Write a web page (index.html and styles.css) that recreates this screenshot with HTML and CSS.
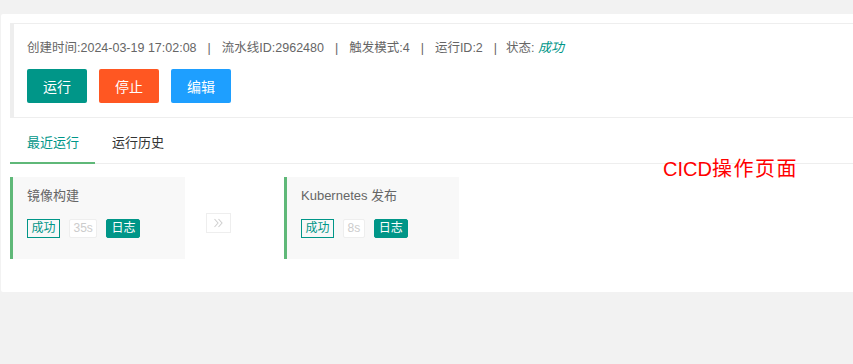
FILE: index.html
```html
<!DOCTYPE html>
<html lang="zh-CN">
<head>
<meta charset="utf-8">
<title>CICD</title>
<link rel="stylesheet" href="styles.css">
</head>
<body>
<div class="page">
  <div class="card">
    <div class="quote">
      <div class="meta">
        <span>创建时间:2024-03-19 17:02:08</span><span class="sep">|</span><span>流水线ID:2962480</span><span class="sep">|</span><span>触发模式:4</span><span class="sep">|</span><span>运行ID:2</span><span class="sep sep-last">|</span><span>状态: <em class="ok">成功</em></span>
      </div>
      <div class="btns">
        <button class="btn btn-run">运行</button>
        <button class="btn btn-stop">停止</button>
        <button class="btn btn-edit">编辑</button>
      </div>
    </div>
    <div class="tabs">
      <ul class="tab-title">
        <li class="active">最近运行</li>
        <li>运行历史</li>
      </ul>
      <div class="stages">
        <div class="stage">
          <div class="stage-name">镜像构建</div>
          <div class="badges">
            <span class="badge badge-ok">成功</span>
            <span class="badge badge-time">35s</span>
            <span class="badge badge-log">日志</span>
          </div>
        </div>
        <div class="arrow">
          <svg width="11" height="10" viewBox="0 0 11 10"><path d="M1.5 1 L5 5 L1.5 9 M5.5 1 L9 5 L5.5 9" fill="none" stroke="#d0d0d0" stroke-width="1.1"/></svg>
        </div>
        <div class="stage">
          <div class="stage-name">Kubernetes 发布</div>
          <div class="badges">
            <span class="badge badge-ok">成功</span>
            <span class="badge badge-time">8s</span>
            <span class="badge badge-log">日志</span>
          </div>
        </div>
      </div>
    </div>
    <div class="note">CICD<span class="note-cjk">操作页面</span></div>
  </div>
</div>
</body>
</html>
```

FILE: styles.css
```css
html, body {
  margin: 0;
  padding: 0;
  background: #f2f2f2;
  font-family: "Liberation Sans", "Noto Sans CJK SC", sans-serif;
  font-size: 13px;
  color: #666;
}

.page {
  padding: 14px 0 0 1px;
  overflow: hidden;
}

.card {
  position: relative;
  background: #fff;
  border-radius: 2px 0 0 2px;
  padding: 9px 0 33px 9px;
}

.quote {
  border: 1px solid #eee;
  border-left-width: 4px;
  border-right-width: 0;
  padding: 14px 0 14px 13px;
}

.meta {
  line-height: 20px;
  font-size: 12.5px;
  white-space: nowrap;
  color: #666;
}

.sep {
  margin: 0 11px;
}

.sep-last {
  margin-right: 9px;
}

.ok {
  color: #009688;
  font-style: italic;
  font-size: 13px;
}

.btns {
  display: flex;
  gap: 12px;
  margin-top: 11px;
}

.btn {
  height: 34px;
  width: 60px;
  border: 0;
  border-radius: 2px;
  color: #fff;
  font-family: inherit;
  font-size: 14px;
  padding: 0;
}

.btn-run { background: #009688; }
.btn-stop { background: #ff5722; }
.btn-edit { background: #1e9fff; }

.tab-title {
  list-style: none;
  margin: 5px 0 0;
  padding: 0;
  display: flex;
  border-bottom: 1px solid #eee;
}

.tab-title li {
  position: relative;
  height: 40px;
  line-height: 40px;
  padding: 0 17px;
  color: #333;
}

.tab-title li.active {
  color: #009688;
  padding-right: 16px;
}

.tab-title li.active::after {
  content: "";
  position: absolute;
  left: 0;
  right: 0;
  bottom: -1px;
  height: 2px;
  background: #5fb878;
}

.stages {
  display: flex;
  align-items: flex-start;
  margin-top: 13px;
}

.stage {
  width: 175px;
  height: 82px;
  background: #f8f8f8;
  border-left: 3px solid #5fb878;
  padding: 9px 0 0 14px;
  box-sizing: border-box;
}

.stage-name {
  line-height: 20px;
  color: #666;
  white-space: nowrap;
}

.badges {
  display: flex;
  gap: 9px;
  margin-top: 13px;
}

.badge {
  height: 19px;
  line-height: 17px;
  padding: 0 4px;
  border: 1px solid #eee;
  border-radius: 2px;
  font-size: 12px;
  box-sizing: border-box;
}

.badge-ok {
  border-color: #009688;
  color: #009688;
  border-radius: 0;
  padding: 0 3.5px;
}

.badge-time {
  color: #ccc;
  background: #fff;
  padding: 0 3.5px;
}

.badge-log {
  background: #009688;
  border-color: #009688;
  color: #fff;
}

.arrow {
  width: 25px;
  height: 20px;
  box-sizing: border-box;
  border: 1px solid #eee;
  margin: 36px 53px 0 21px;
  display: flex;
  align-items: center;
  justify-content: center;
}

.note {
  position: absolute;
  left: 662px;
  top: 145px;
  font-size: 20px;
  line-height: 20px;
  color: #ff0000;
  white-space: nowrap;
}

.note-cjk {
  letter-spacing: 1.5px;
}
```
